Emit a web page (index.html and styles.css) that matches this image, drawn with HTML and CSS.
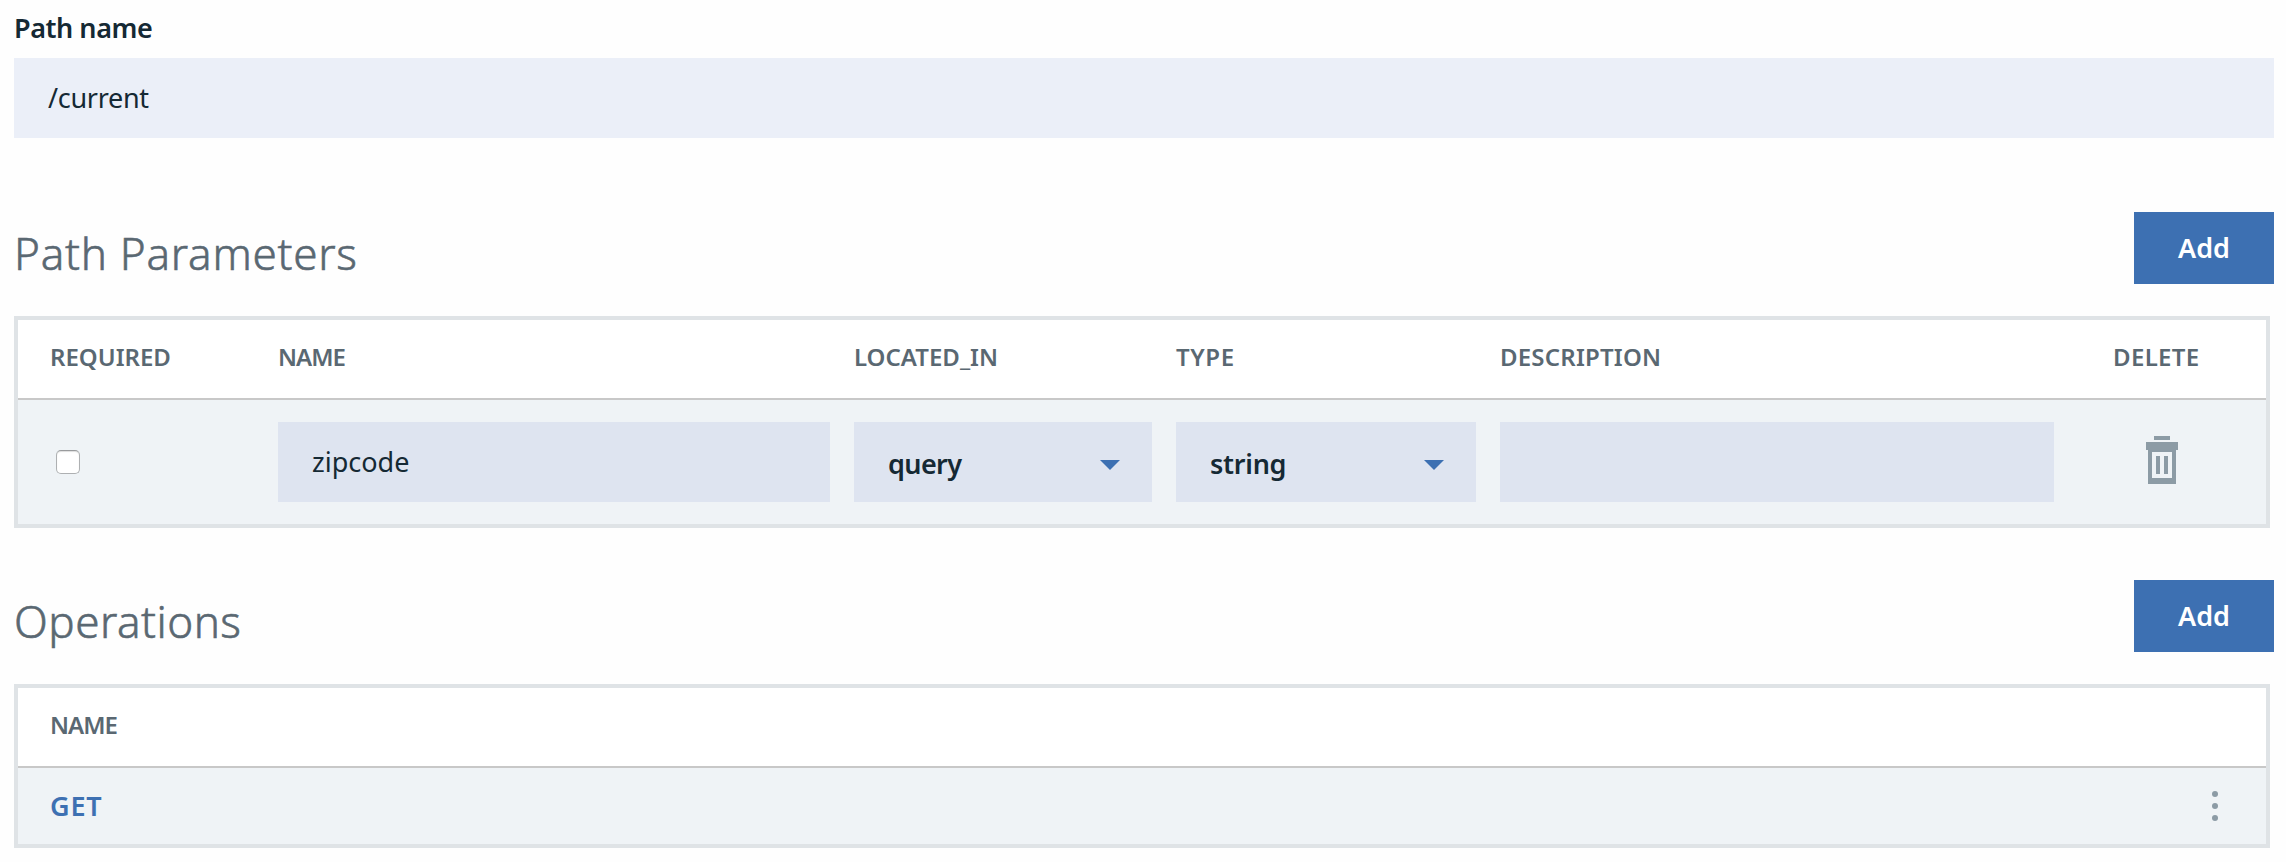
FILE: index.html
```html
<!DOCTYPE html>
<html lang="en">
<head>
<meta charset="utf-8">
<title>Path</title>
<link rel="stylesheet" href="styles.css">
</head>
<body>
<main class="page">
  <label class="label" for="path">Path name</label>
  <input class="input input-path" id="path" type="text" value="/current">

  <section class="section">
    <header class="section-head">
      <h2 class="title title-params">Path Parameters</h2>
      <button class="add" type="button">Add</button>
    </header>
    <div class="table">
      <div class="row row-head">
        <span class="th">REQUIRED</span>
        <span class="th th-name">NAME</span>
        <span class="th">LOCATED_IN</span>
        <span class="th th-type">TYPE</span>
        <span class="th th-desc">DESCRIPTION</span>
        <span class="th th-delete">DELETE</span>
      </div>
      <div class="row row-body">
        <div><input class="check" type="checkbox" aria-label="Required"></div>
        <div class="cell-name"><input class="input" type="text" value="zipcode" aria-label="Name"></div>
        <div class="cell-located">
          <div class="select"><span class="value value-query">query</span>
            <svg class="caret" width="20" height="10" viewBox="0 0 20 10"><path d="M0 0H20L10 10Z"/></svg>
          </div>
        </div>
        <div class="cell-type">
          <div class="select"><span class="value">string</span>
            <svg class="caret" width="20" height="10" viewBox="0 0 20 10"><path d="M0 0H20L10 10Z"/></svg>
          </div>
        </div>
        <div class="cell-desc"><input class="input" type="text" value="" aria-label="Description"></div>
        <div class="cell-delete">
          <svg class="trash" width="32" height="48" viewBox="0 0 32 48"><path fill-rule="evenodd" d="M8 0H24V4H8ZM0 6H32V14H30V48H2V14H0ZM6 16V42H26V16ZM10 20H14V38H10ZM18 20H22V38H18Z"/></svg>
        </div>
      </div>
    </div>
  </section>

  <section class="section section-ops">
    <header class="section-head">
      <h2 class="title">Operations</h2>
      <button class="add" type="button">Add</button>
    </header>
    <div class="table">
      <div class="row-head row-single"><span class="th th-name">NAME</span></div>
      <div class="row-op">
        <a class="method">GET</a>
        <svg class="dots" width="6" height="30" viewBox="0 0 6 30"><circle cx="3" cy="3" r="3"/><circle cx="3" cy="15" r="3"/><circle cx="3" cy="27" r="3"/></svg>
      </div>
    </div>
  </section>
</main>
</body>
</html>
```
FILE: styles.css
```css
* { box-sizing: border-box; }

body {
  margin: 0;
  background: #fefefe;
  color: #152934;
  font-family: "Noto Sans", "Open Sans", sans-serif;
  font-size: 27px;
}

.page { padding: 10px 12px 0 14px; }

.label {
  display: block;
  height: 36px;
  margin-bottom: 12px;
  line-height: 36px;
  font-weight: 600;
  letter-spacing: -0.45px;
}

.input {
  display: block;
  width: 100%;
  height: 80px;
  padding: 0 34px 2px;
  border: 0;
  border-radius: 0;
  background: #dee4f0;
  color: #152934;
  font: inherit;
}

.input-path { background: #ebeff8; letter-spacing: -0.3px; }

.section { margin-top: 74px; }
.section-ops { margin-top: 52px; }

.section-head {
  display: flex;
  justify-content: space-between;
  align-items: flex-start;
  height: 104px;
}

.title {
  margin: 11px 0 0;
  line-height: 60px;
  font-size: 44px;
  font-weight: 300;
  letter-spacing: 0.5px;
  color: #5a6872;
  -webkit-text-stroke: 0.6px #5a6872;
}

.title-params { letter-spacing: 0.75px; }

.add {
  width: 140px;
  height: 72px;
  padding: 0 0 2px;
  border: 0;
  background: #3d70b2;
  color: #fff;
  font: inherit;
  font-weight: 600;
}

.table {
  margin-right: 4px;
  border: 4px solid #dfe3e6;
  background: #fff;
}

.row {
  display: grid;
  grid-template-columns: 228px 576px 322px 324px 613px 1fr;
  padding-left: 32px;
  align-items: center;
}

.row-head {
  height: 80px;
  padding-bottom: 5px;
  border-bottom: 2px solid #c8c8c8;
}

.row-single {
  display: flex;
  align-items: center;
  padding-left: 32px;
}

.th {
  color: #5a6872;
  font-size: 24px;
  font-weight: 600;
  letter-spacing: 0;
}

.th-name { letter-spacing: -1px; }
.th-type { letter-spacing: 0.6px; }
.th-desc { letter-spacing: 0.2px; }
.th-delete { letter-spacing: 0.35px; }

.row-body { height: 124px; background: #eff3f6; }

.check {
  appearance: none;
  display: block;
  width: 24px;
  height: 24px;
  margin: 0 0 0 6px;
  border: 1px solid #aeb0b2;
  border-top-color: #999b9d;
  border-radius: 5px;
  background: #fff;
  box-shadow: inset 0 1px 1px #ddd;
}

.cell-name, .cell-located { padding-right: 24px; }
.cell-type { padding-right: 24px; }
.cell-desc { padding-right: 59px; }
.cell-delete { padding-left: 33px; }

.select {
  display: flex;
  justify-content: space-between;
  align-items: center;
  height: 80px;
  padding: 0 32px 0 34px;
  background: #dee4f0;
}

.value { padding-top: 3px; font-weight: 600; letter-spacing: -0.25px; }
.value-query { letter-spacing: -0.6px; }

.caret { margin-top: 6px; fill: #3d70b2; }
.trash { display: block; margin-top: -4px; fill: #8c9ba5; }

.row-op {
  display: flex;
  justify-content: space-between;
  align-items: center;
  height: 76px;
  padding: 0 48px 0 32px;
  background: #eff3f6;
}

.method { padding-bottom: 2px; color: #3d70b2; font-weight: 600; letter-spacing: 0.8px; }
.dots { fill: #8c9ba5; }
```
